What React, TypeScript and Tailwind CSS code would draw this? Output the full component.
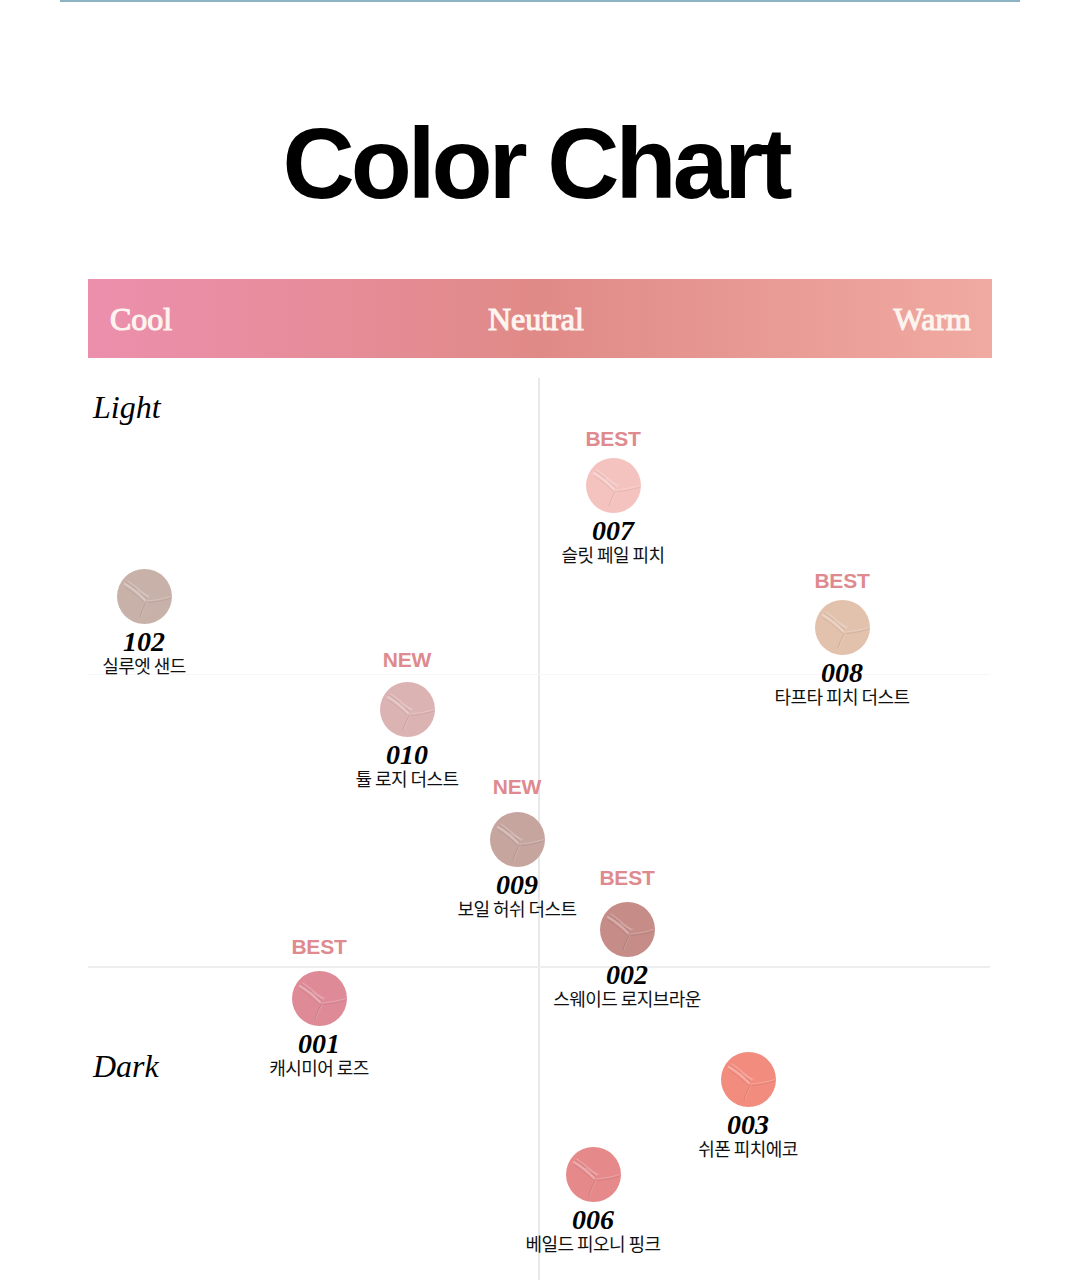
import React from "react";

type Item = {
  code: string;
  name: string;
  cx: number;
  cy: number;
  color: string;
  tag?: "BEST" | "NEW";
  tagGap?: number;
};

const CHART_TOP = 358;

const items: Item[] = [
  { code: "007", name: "슬릿 페일 피치", cx: 613, cy: 485, color: "#f4c3bf", tag: "BEST", tagGap: 9 },
  { code: "102", name: "실루엣 샌드", cx: 144, cy: 596, color: "#c8b1a9" },
  { code: "008", name: "타프타 피치 더스트", cx: 842, cy: 627, color: "#e2c1ad", tag: "BEST", tagGap: 9 },
  { code: "010", name: "튤 로지 더스트", cx: 407, cy: 709, color: "#dcb3b3", tag: "NEW", tagGap: 12 },
  { code: "009", name: "보일 허쉬 더스트", cx: 517, cy: 839, color: "#c6a59f", tag: "NEW", tagGap: 15 },
  { code: "002", name: "스웨이드 로지브라운", cx: 627, cy: 929, color: "#c58c88", tag: "BEST", tagGap: 14 },
  { code: "001", name: "캐시미어 로즈", cx: 319, cy: 998, color: "#de8b97", tag: "BEST", tagGap: 14 },
  { code: "003", name: "쉬폰 피치에코", cx: 748, cy: 1079, color: "#f28c7e" },
  { code: "006", name: "베일드 피오니 핑크", cx: 593, cy: 1174, color: "#e5898a" },
];

function Swatch({ color }: { color: string }) {
  return (
    <svg width="55" height="55" viewBox="0 0 55 55" className="block">
      <circle cx="27.5" cy="27.5" r="27.5" fill={color} />
      <g fill="none" strokeLinecap="round">
        <path d="M8 15 C15 19 22 25 28 31" stroke="#ffffff" strokeOpacity="0.3" strokeWidth="2.2" />
        <path d="M11 12 C18 17 24 22 31 28" stroke="#ffffff" strokeOpacity="0.22" strokeWidth="1.4" />
        <path d="M9.5 13.5 C16.5 18 23 23.5 29.5 29.5" stroke="#000000" strokeOpacity="0.08" strokeWidth="0.9" />
        <path d="M8 18 C14 22 21 27 27 33" stroke="#000000" strokeOpacity="0.07" strokeWidth="0.9" />
        <path d="M20 21 C24 24 27 26 33 27" stroke="#ffffff" strokeOpacity="0.18" strokeWidth="1.2" />
        <path d="M29 34 C26.5 38.5 24.5 42.5 23 48" stroke="#000000" strokeOpacity="0.1" strokeWidth="1" />
        <path d="M30 34 C27.5 38.5 25.5 42.5 24 48" stroke="#ffffff" strokeOpacity="0.18" strokeWidth="0.9" />
        <path d="M30 32 C38 31.5 46 30 54 27.5" stroke="#ffffff" strokeOpacity="0.22" strokeWidth="1.1" />
        <path d="M31 33.5 C39 33 47 31.5 54 29" stroke="#000000" strokeOpacity="0.07" strokeWidth="0.9" />
      </g>
    </svg>
  );
}

function ChartItem({ item }: { item: Item }) {
  return (
    <div
      className="absolute flex w-[240px] -translate-x-1/2 flex-col items-center"
      style={{ left: item.cx, top: item.cy - 27.5 - CHART_TOP }}
    >
      {item.tag && (
        <div
          className="absolute bottom-full text-[21px] font-bold leading-[21px] tracking-[-0.01em] text-[#de8a8e] [font-family:'Liberation_Sans',Arial,sans-serif]"
          style={{ marginBottom: item.tagGap }}
        >
          {item.tag}
        </div>
      )}
      <Swatch color={item.color} />
      <div className="mt-[5px] text-[28px] font-bold italic leading-[26px] text-black [font-family:'Liberation_Serif','Times_New_Roman',serif]">
        {item.code}
      </div>
      <div className="mt-[1px] whitespace-nowrap text-[18px] leading-[19px] tracking-[-0.03em] text-[#111] [font-family:'Noto_Sans_CJK_KR','Noto_Sans',sans-serif]">
        {item.name}
      </div>
    </div>
  );
}

export default function App() {
  return (
    <div className="relative h-[1280px] w-[1080px] overflow-hidden bg-white">
      <div className="mx-[60px] h-[2px] bg-[#8db4c3]" />

      <h1 className="mt-[111px] h-[100px] pr-[9px] text-center text-[100px] font-bold leading-[100px] tracking-[-0.04em] text-black [font-family:'Liberation_Sans',Arial,sans-serif]">
        Color Chart
      </h1>

      <div className="mx-[88px] mt-[66px] flex h-[79px] items-center justify-between bg-linear-to-r from-[#ec8fad] via-[#e08a87] to-[#f0aaa1] pl-[22px] pr-[21px] text-[32px] leading-none text-[#fdf4f0] [font-family:'Liberation_Serif','Times_New_Roman',serif] [-webkit-text-stroke:1.1px_#fdf4f0]">
        <span>Cool</span>
        <span className="pl-[6px]">Neutral</span>
        <span>Warm</span>
      </div>

      <div className="relative h-[922px]">
        <div className="absolute bottom-0 left-[538px] top-[20px] w-[2px] bg-[#e8e8e8]" />
        <div className="absolute left-[88px] top-[316px] h-[1px] w-[902px] bg-[#f7f7f7]" />
        <div className="absolute left-[88px] top-[608px] h-[2px] w-[902px] bg-[#eeeeee]" />

        <div className="absolute left-[93px] top-[33px] text-[32px] italic leading-[32px] text-black [font-family:'Liberation_Serif','Times_New_Roman',serif]">
          Light
        </div>
        <div className="absolute left-[93px] top-[692px] text-[32px] italic leading-[32px] text-black [font-family:'Liberation_Serif','Times_New_Roman',serif]">
          Dark
        </div>

        {items.map((it) => (
          <ChartItem key={it.code} item={it} />
        ))}
      </div>
    </div>
  );
}
